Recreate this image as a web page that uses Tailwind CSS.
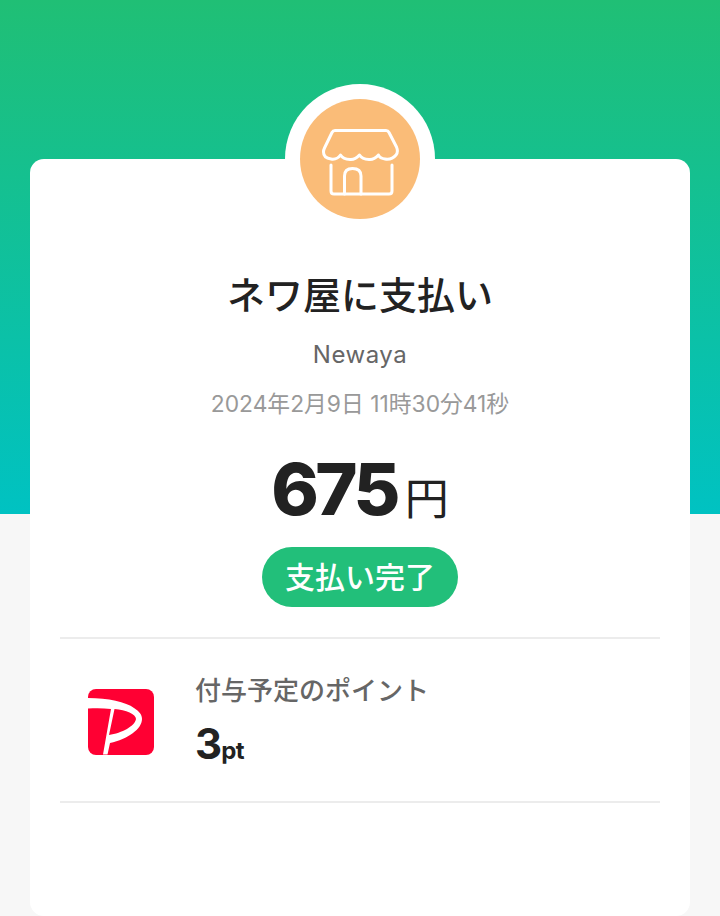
<!DOCTYPE html>
<html lang="ja">
<head>
  <meta charset="UTF-8" />
  <meta name="viewport" content="width=device-width, initial-scale=1.0"/>
  <title>支払い完了</title>
  <script src="https://cdn.jsdelivr.net/npm/@tailwindcss/browser@4"></script>
</head>
<body class="h-[916px] overflow-hidden bg-[#f7f7f7] bg-[linear-gradient(180deg,#20bf75,#00c2c2)] bg-[length:100%_514px] bg-no-repeat font-['Inter','Noto_Sans_CJK_JP',sans-serif]">

  <div class="flex flex-col items-center pt-[84px]">
    <!-- Card, with the shop badge pulled up over its top edge -->
    <div class="mt-[75px] flex h-[757px] w-[660px] flex-col items-center rounded-[14px] bg-white px-[30px]">
      <div class="z-10 -mt-[75px] flex size-[150px] items-center justify-center rounded-full bg-white">
        <div class="flex size-[120px] items-center justify-center rounded-full bg-[#fabc78]">
          <svg class="size-[80px]" viewBox="0 0 80 80" fill="none" stroke="white" stroke-width="3" stroke-linecap="round" stroke-linejoin="round">
            <path d="M15 11.500 H66 Q68 11.500 69 13.500 L76.500 28 Q78.500 33 76 36 Q72 41 65 40 Q60 39.500 58.500 36 Q54 41 49 40.500 Q42 40 39.500 36 Q35 41 30 40.500 Q23 40 20.500 36 Q17 41 11 40 Q3.500 39 3.500 33 Q3.500 31 4.500 29 L12 13.500 Q13 11.500 15 11.500 Z"/>
            <path d="M11 46 V72 Q11 75 14 75 H69 Q72 75 72 72 V46"/>
            <path d="M24.500 75 V57 Q24.500 49.500 32.500 49.500 Q41 49.500 41 57 V75"/>
          </svg>
        </div>
      </div>

      <h1 class="mt-[33px] text-[38px] leading-[56px] font-medium text-[#222222]">ネワ屋に支払い</h1>
      <p class="mt-[15px] text-[24px] leading-[34px] tracking-[0.5px] text-[#666666]">Newaya</p>
      <p class="mt-[17px] text-[22.800px] leading-[30px] text-[#999999]">2024年2月9日 11時30分41秒</p>

      <div class="mt-[26px] flex items-baseline gap-[8px] text-[#222222]">
        <span class="text-[72px] leading-[88px] font-extrabold tracking-[-3.500px]">675</span>
        <span class="text-[44px] leading-[50px]">円</span>
      </div>

      <div class="mt-[14px] flex h-[60px] w-[196px] items-center justify-center rounded-full bg-[#22bf7a] text-[30px] font-medium text-white">支払い完了</div>

      <!-- Points row -->
      <div class="mt-[30px] flex h-[166px] w-full items-center gap-[41px] border-y-2 border-[#ececec] pt-[4px] pl-[28px]">
        <svg class="size-[66px] shrink-0" viewBox="0 0 66 66">
          <rect width="66" height="66" rx="8" fill="#ff0033"/>
          <path d="M0 9 C20 9 38 13 46 19 C52 23 54 26 54 30 C54 40 40 50 22 54 L19.500 65.500 L15 65.500 L23 20 C15 19 8 19 0 19.500 Z M26.500 20 L21 46 C34 44 47 37 48 30 C48 25 38 21 26.500 20 Z" fill="white" fill-rule="evenodd"/>
        </svg>
        <div class="flex flex-col">
          <span class="text-[26px] leading-[36px] font-medium text-[#666666]">付与予定のポイント</span>
          <span class="mt-[8px] flex items-baseline font-bold text-[#222222]">
            <span class="text-[42px] leading-[54px] tracking-[-1px]">3</span>
            <span class="text-[24px] leading-[30px] tracking-[-0.5px]">pt</span>
          </span>
        </div>
      </div>
    </div>
  </div>

</body>
</html>
